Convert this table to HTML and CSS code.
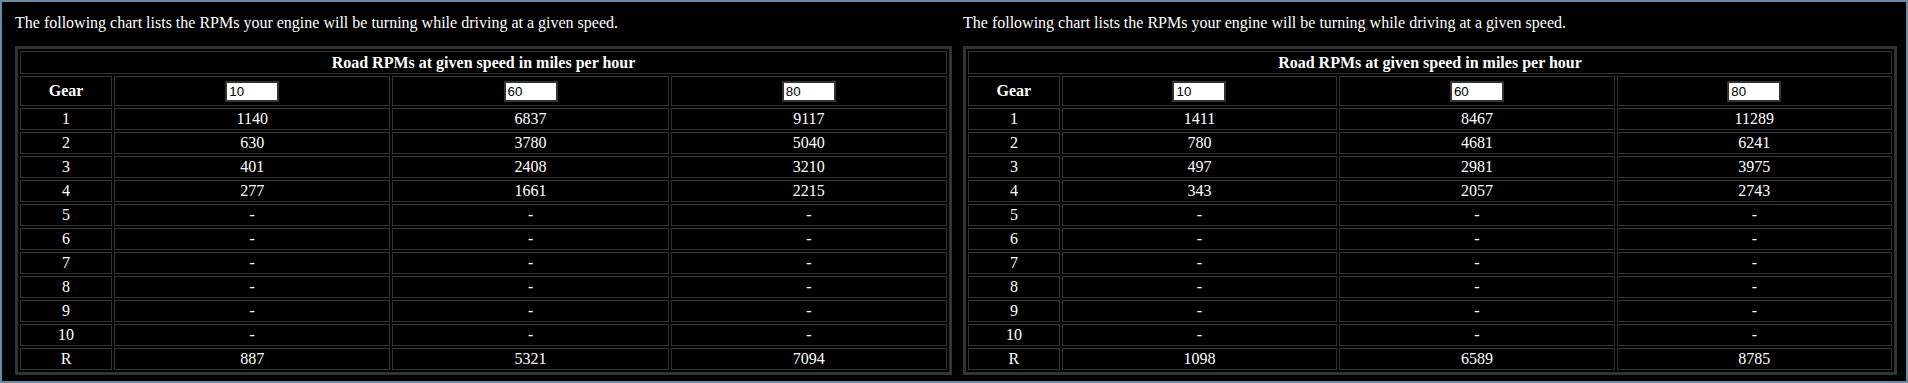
FILE: index.html
```html
<!DOCTYPE html>
<html>
<head>
<meta charset="utf-8">
<title>Road RPMs</title>
<link rel="stylesheet" href="styles.css">
</head>
<body>
<div class="frame">
  <div class="panel">
    <div class="intro">The following chart lists the RPMs your engine will be turning while driving at a given speed.</div>
    <table class="rpm">
      <colgroup><col class="c-gear"><col class="c-spd"><col class="c-spd"><col class="c-spd"></colgroup>
      <tr><th colspan="4" class="title">Road RPMs at given speed in miles per hour</th></tr>
      <tr class="inputs"><th>Gear</th><td><input class="spd" value="10"></td><td><input class="spd" value="60"></td><td><input class="spd" value="80"></td></tr>
      <tr><td>1</td><td>1140</td><td>6837</td><td>9117</td></tr>
      <tr><td>2</td><td>630</td><td>3780</td><td>5040</td></tr>
      <tr><td>3</td><td>401</td><td>2408</td><td>3210</td></tr>
      <tr><td>4</td><td>277</td><td>1661</td><td>2215</td></tr>
      <tr><td>5</td><td>-</td><td>-</td><td>-</td></tr>
      <tr><td>6</td><td>-</td><td>-</td><td>-</td></tr>
      <tr><td>7</td><td>-</td><td>-</td><td>-</td></tr>
      <tr><td>8</td><td>-</td><td>-</td><td>-</td></tr>
      <tr><td>9</td><td>-</td><td>-</td><td>-</td></tr>
      <tr><td>10</td><td>-</td><td>-</td><td>-</td></tr>
      <tr><td>R</td><td>887</td><td>5321</td><td>7094</td></tr>
    </table>
  </div>
  <div class="panel">
    <div class="intro">The following chart lists the RPMs your engine will be turning while driving at a given speed.</div>
    <table class="rpm">
      <colgroup><col class="c-gear"><col class="c-spd"><col class="c-spd"><col class="c-spd"></colgroup>
      <tr><th colspan="4" class="title">Road RPMs at given speed in miles per hour</th></tr>
      <tr class="inputs"><th>Gear</th><td><input class="spd" value="10"></td><td><input class="spd" value="60"></td><td><input class="spd" value="80"></td></tr>
      <tr><td>1</td><td>1411</td><td>8467</td><td>11289</td></tr>
      <tr><td>2</td><td>780</td><td>4681</td><td>6241</td></tr>
      <tr><td>3</td><td>497</td><td>2981</td><td>3975</td></tr>
      <tr><td>4</td><td>343</td><td>2057</td><td>2743</td></tr>
      <tr><td>5</td><td>-</td><td>-</td><td>-</td></tr>
      <tr><td>6</td><td>-</td><td>-</td><td>-</td></tr>
      <tr><td>7</td><td>-</td><td>-</td><td>-</td></tr>
      <tr><td>8</td><td>-</td><td>-</td><td>-</td></tr>
      <tr><td>9</td><td>-</td><td>-</td><td>-</td></tr>
      <tr><td>10</td><td>-</td><td>-</td><td>-</td></tr>
      <tr><td>R</td><td>1098</td><td>6589</td><td>8785</td></tr>
    </table>
  </div>
</div>
</body>
</html>
```
FILE: styles.css
```css
html, body {
  margin: 0;
  padding: 0;
  background: #000;
}
body {
  font-family: "Liberation Serif", "Times New Roman", serif;
  font-size: 16px;
  color: #fff;
}
.frame {
  box-sizing: border-box;
  width: 1908px;
  height: 383px;
  border: 2px solid #6b8aa3;
  background: #000;
  padding: 12px 0 0 13px;
  display: grid;
  grid-template-columns: 937px 934px;
  column-gap: 11px;
  align-items: start;
}
.intro {
  line-height: normal;
  margin: 0 0 14px 0;
}
.rpm {
  width: 100%;
  table-layout: fixed;
  border-collapse: separate;
  border-spacing: 2px;
  border: 3px solid #333;
  background: #000;
}
.c-gear { width: 10%; }
.c-spd { width: 30%; }
.rpm td, .rpm th {
  border: 1px solid #333;
  padding: 1px;
  text-align: center;
  vertical-align: middle;
  line-height: normal;
}
.rpm th { font-weight: bold; }
.rpm th.title { padding-top: 2px; }
.spd {
  box-sizing: content-box;
  display: inline-block;
  vertical-align: top;
  width: 46px;
  height: 15px;
  margin: 3px 0 2px 0;
  padding: 1px 2px;
  border: 2px solid #333;
  background: #fff;
  color: #000;
  font-family: "Liberation Sans", Arial, sans-serif;
  font-size: 13.33px;
  line-height: 15px;
  outline: none;
}
```
